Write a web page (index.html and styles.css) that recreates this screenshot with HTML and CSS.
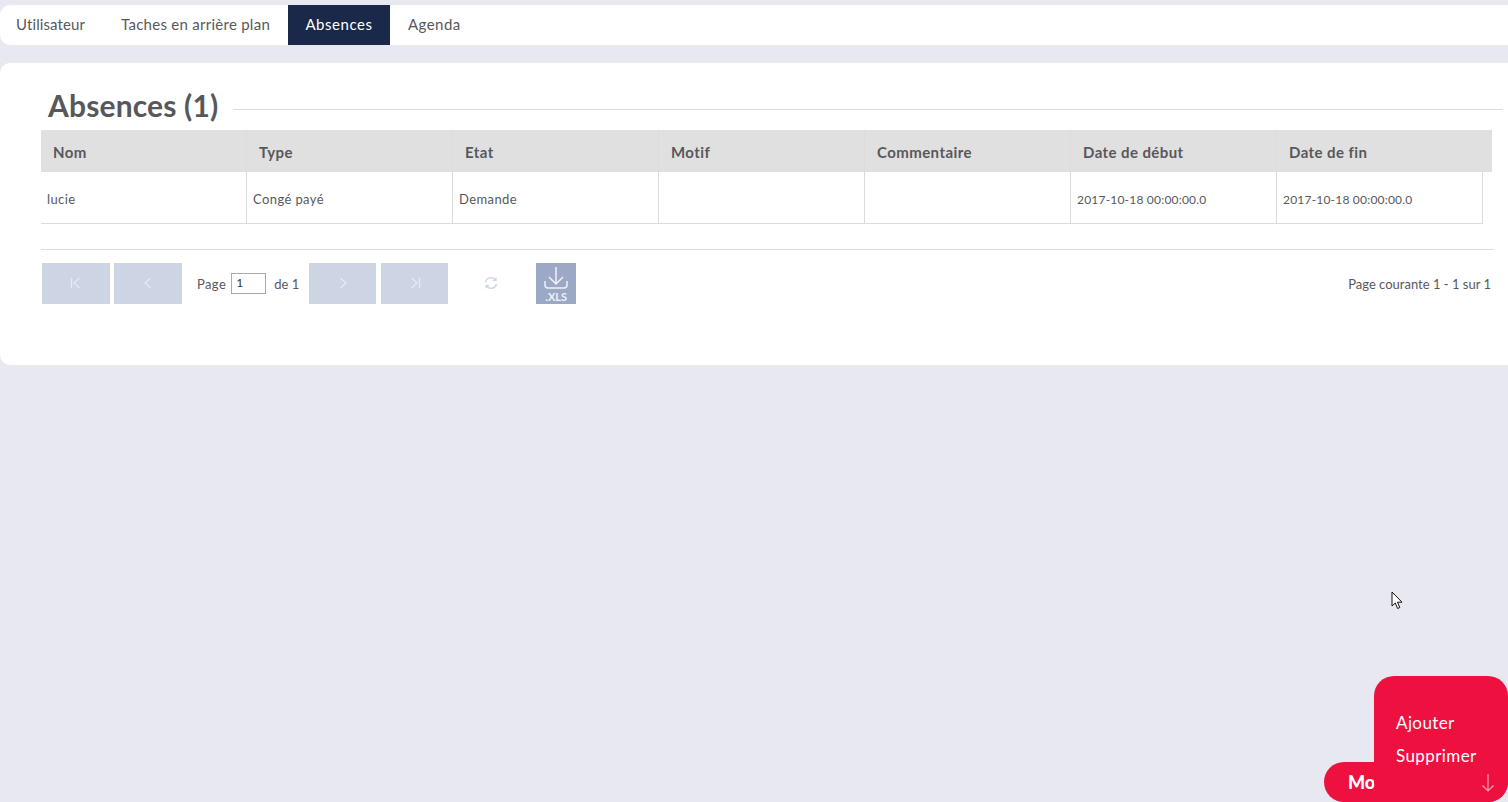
FILE: index.html
```html
<!DOCTYPE html>
<html lang="fr">
<head>
<meta charset="utf-8">
<title>Absences</title>
<link rel="stylesheet" href="styles.css">
</head>
<body>
<nav class="tabs">
  <a class="tab tab-user">Utilisateur</a>
  <a class="tab tab-tasks">Taches en arrière plan</a>
  <a class="tab tab-active">Absences</a>
  <a class="tab tab-agenda">Agenda</a>
</nav>
<main class="panel">
  <div class="title-row">
    <h1 class="title">Absences (1)</h1>
    <div class="title-line"></div>
  </div>
  <div class="grid-head">
    <div class="hcell">Nom</div>
    <div class="hcell">Type</div>
    <div class="hcell">Etat</div>
    <div class="hcell">Motif</div>
    <div class="hcell">Commentaire</div>
    <div class="hcell">Date de début</div>
    <div class="hcell">Date de fin</div>
  </div>
  <div class="grid-row">
    <div class="cell">lucie</div>
    <div class="cell">Congé payé</div>
    <div class="cell">Demande</div>
    <div class="cell"></div>
    <div class="cell"></div>
    <div class="cell cell-date">2017-10-18 00:00:00.0</div>
    <div class="cell cell-date">2017-10-18 00:00:00.0</div>
  </div>
  <div class="pager">
    <button class="pbtn pbtn-first" type="button" aria-label="Première page">
      <svg width="12" height="12" viewBox="0 0 12 12"><path d="M1.500 1v10M9.500 1 4 6l5.500 5" /></svg>
    </button>
    <button class="pbtn pbtn-prev" type="button" aria-label="Page précédente">
      <svg width="12" height="12" viewBox="0 0 12 12"><path d="M8.500 1 3 6l5.500 5" /></svg>
    </button>
    <span class="page-label">Page</span>
    <input class="page-input" type="text" value="1" aria-label="Page">
    <span class="page-of">de 1</span>
    <button class="pbtn pbtn-next" type="button" aria-label="Page suivante">
      <svg width="12" height="12" viewBox="0 0 12 12"><path d="M3.500 1 9 6l-5.500 5" /></svg>
    </button>
    <button class="pbtn pbtn-last" type="button" aria-label="Dernière page">
      <svg width="12" height="12" viewBox="0 0 12 12"><path d="M10.500 1v10M2.500 1 8 6l-5.500 5" /></svg>
    </button>
    <svg class="refresh" width="14" height="14" viewBox="0 0 14 14" aria-hidden="true">
      <path d="M1.500 6A5.500 5.500 0 0 1 11 3.500M12.500 8A5.500 5.500 0 0 1 3 10.500" />
      <path class="refresh-fill" d="M12.500 1v4h-4zM1.500 13V9h4z" />
    </svg>
    <button class="xls" type="button" aria-label="Exporter XLS">
      <svg width="26" height="26" viewBox="0 0 26 26"><path d="M13 1v17M6 11l7 7 7-7M2 15v4q0 3 3 3h16q3 0 3-3v-4" /></svg>
      <span class="xls-label">.XLS</span>
    </button>
    <span class="page-status">Page courante 1 - 1 sur 1</span>
  </div>
</main>
<div class="fab">
  <span class="fab-base">Mo</span>
  <div class="fab-menu">
    <a class="fab-item">Ajouter</a>
    <a class="fab-item">Supprimer</a>
    <svg class="fab-arrow" width="14" height="20" viewBox="0 0 14 20" aria-hidden="true"><path d="M7 1v17M1.500 12.500 7 18l5.500-5.500" /></svg>
  </div>
</div>
<svg class="cursor" width="13" height="20" viewBox="0 0 13 20" aria-hidden="true">
  <path d="M1 1v14l3.300-3 2.300 5.500 2.200-1-2.300-5.300H11z" />
</svg>
</body>
</html>
```
FILE: styles.css
```css
* { box-sizing: border-box; }
html, body { height: 100%; }
body {
  margin: 0;
  height: 802px;
  overflow: hidden;
  position: relative;
  background: #e8e8f1;
  font-family: "Lato", "Open Sans", sans-serif;
  color: #58585c;
  padding-top: 5px;
}
.tabs {
  display: flex;
  height: 40px;
  background: #fff;
  border-radius: 10px 0 0 10px;
}
.tab {
  display: flex;
  align-items: center;
  font-size: 15px;
  letter-spacing: .27px;
  height: 40px;
  padding-bottom: 2px;
}
.tab-user { margin-left: 16px; width: 87px; letter-spacing: .1px; }
.tab-tasks { margin-left: 18px; width: 167px; }
.tab-active {
  background: #1a2849;
  color: #fff;
  width: 102px;
  justify-content: center;
  letter-spacing: .55px;
}
.tab-agenda { margin-left: 18px; letter-spacing: .45px; }
.panel {
  margin-top: 18px;
  height: 302px;
  background: #fff;
  border-radius: 10px 0 0 10px;
  padding: 0 0 0 41px;
}
.title-row {
  display: flex;
  align-items: center;
  height: 67px;
  padding: 20px 5px 0 7px;
}
.title {
  margin: -4px 0 0;
  font-size: 30px;
  font-weight: 700;
  letter-spacing: .15px;
  line-height: 1;
  width: 185px;
  flex: none;
}
.title-line {
  flex: 1;
  height: 1px;
  background: #dcdcdc;
  margin-top: 6px;
}
.grid-head {
  display: grid;
  grid-template-columns: repeat(7, 206px);
  width: 1451px;
  height: 42px;
  background: #e0e0e0;
}
.hcell {
  display: flex;
  align-items: center;
  padding: 2px 0 0 12px;
  font-size: 15px;
  font-weight: 700;
  letter-spacing: .42px;
  border-right: 1px solid #dcdcdc;
}
.hcell:last-child { border-right: 0; }
.grid-row {
  display: grid;
  grid-template-columns: 206px repeat(6, 206px);
  width: 1442px;
  height: 52px;
  border-bottom: 1px solid #dcdcdc;
}
.cell {
  display: flex;
  align-items: center;
  padding: 2px 0 0 6px;
  font-size: 13px;
  letter-spacing: .4px;
  border-right: 1px solid #dcdcdc;
}
.cell-date { font-size: 12px; letter-spacing: .2px; padding-top: 3px; }
.pager {
  display: flex;
  align-items: center;
  width: 1453px;
  height: 55px;
  margin-top: 25px;
  padding: 13px 3px 1px 1px;
  border-top: 1px solid #dedede;
  font-size: 13px;
}
.pbtn {
  width: 68px;
  height: 41px;
  padding: 0;
  border: 0;
  background: #cdd4e3;
  display: flex;
  align-items: center;
  justify-content: center;
  flex: none;
}
.pbtn svg path {
  fill: none;
  stroke: #e6eaf2;
  stroke-width: 1.300;
}
.pbtn-prev { margin-left: 4px; }
.pbtn-next { margin-left: 11px; width: 67px; }
.pbtn-last { margin-left: 5px; width: 67px; }
.page-label { margin: 2px 0 0 15px; letter-spacing: .4px; }
.page-input {
  width: 35px;
  height: 21px;
  margin-left: 5px;
  padding: 0 0 2px 4px;
  border: 1px solid #a9a9a9;
  border-radius: 0;
  font: 12px "Lato", sans-serif;
  color: #333;
  outline: 0;
}
.page-of { margin: 2px 0 0 8px; }
.pbtn-next { margin-left: 10px; }
.refresh {
  margin-left: 36px;
  flex: none;
}
.refresh path { fill: none; stroke: #cdd4e3; stroke-width: 1.300; }
.refresh path.refresh-fill { fill: #cdd4e3; stroke: none; }
.xls {
  position: relative;
  width: 40px;
  height: 41px;
  margin-left: 38px;
  padding: 0;
  border: 0;
  background: #9ba8c6;
  flex: none;
  display: flex;
  justify-content: center;
  align-items: flex-start;
}
.xls svg path { fill: none; stroke: #f0f2f7; stroke-width: 1.500; }
.xls svg { margin-top: 3px; }
.xls-label {
  position: absolute;
  left: 0;
  right: 0;
  bottom: 2px;
  background: #9ba8c6;
  color: #f0f2f7;
  font: 700 11px/11px "Lato", sans-serif;
  text-align: center;
  width: 26px;
  margin: 0 auto;
}
.page-status { margin: 2px 0 0 auto; }
.fab {
  position: absolute;
  right: 0;
  bottom: 0;
  width: 184px;
  height: 126px;
}
.fab-base {
  position: absolute;
  left: 0;
  bottom: 0;
  width: 184px;
  height: 40px;
  padding-left: 24px;
  background: #ee1140;
  border-radius: 20px;
  color: #fff;
  font-size: 18px;
  font-weight: 900;
  line-height: 40px;
}
.fab-menu {
  position: absolute;
  right: 0;
  top: 0;
  width: 134px;
  height: 126px;
  background: #ee1140;
  border-radius: 20px;
  color: #fff;
  padding: 30px 0 0 22px;
  font-size: 17px;
  letter-spacing: .4px;
}
.fab-item {
  display: block;
  height: 33px;
  line-height: 33px;
}
.fab-arrow {
  position: absolute;
  right: 13px;
  bottom: 9px;
}
.fab-arrow path { fill: none; stroke: #f8a0b4; stroke-width: 1.200; }
.cursor {
  position: absolute;
  left: 1391px;
  top: 591px;
}
.cursor path { fill: #fff; stroke: #111; stroke-width: 1; }
```
